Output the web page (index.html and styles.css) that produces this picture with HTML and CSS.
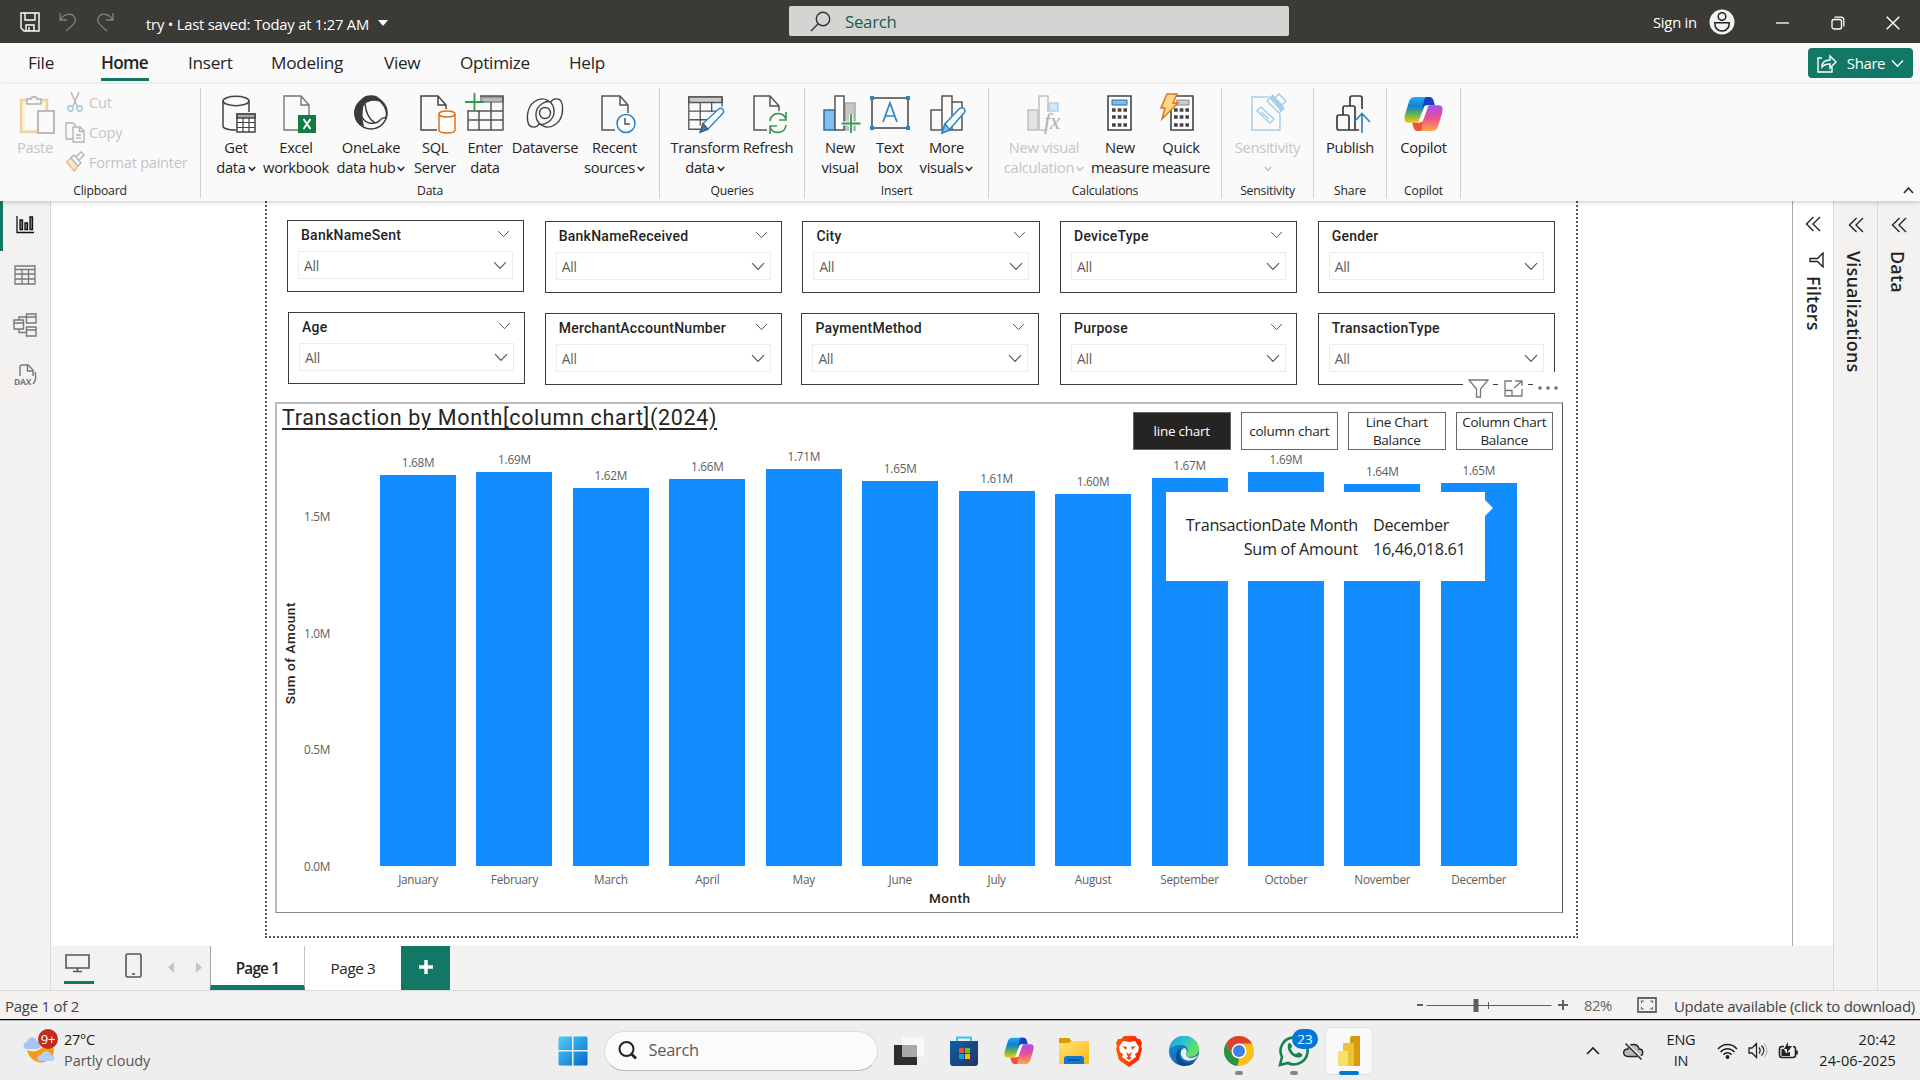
FILE: index.html
```html
<!DOCTYPE html>
<html lang="en">
<head>
<meta charset="utf-8">
<title>try - Power BI Desktop</title>
<link rel="stylesheet" href="styles.css">
</head>
<body>
<svg class="defs" width="0" height="0" aria-hidden="true">
  <defs>
    <linearGradient id="cpA" x1="0" y1="0" x2="0" y2="1"><stop offset="0" stop-color="#1fa9f5"/><stop offset=".35" stop-color="#0f7fd8"/><stop offset=".65" stop-color="#58b357"/><stop offset="1" stop-color="#fcc70d"/></linearGradient>
    <linearGradient id="cpB" x1="0" y1="0" x2="0" y2="1"><stop offset="0" stop-color="#a64ff0"/><stop offset=".5" stop-color="#ee5090"/><stop offset="1" stop-color="#ffa848"/></linearGradient>
    <linearGradient id="win" x1="0" y1="0" x2="1" y2="1"><stop offset="0" stop-color="#4fd1ff"/><stop offset="1" stop-color="#0067c8"/></linearGradient>
    <linearGradient id="fold" x1="0" y1="0" x2="1" y2="1"><stop offset="0" stop-color="#ffdf75"/><stop offset="1" stop-color="#fdbb10"/></linearGradient>
    <linearGradient id="store" x1="0" y1="0" x2="1" y2="1"><stop offset="0" stop-color="#0f5eab"/><stop offset="1" stop-color="#253560"/></linearGradient>
    <linearGradient id="brave" x1="0" y1="0" x2="1" y2="0"><stop offset="0" stop-color="#ff5a0a"/><stop offset="1" stop-color="#fa2000"/></linearGradient>
    <linearGradient id="edgeT" x1="0" y1="0" x2="1" y2=".5"><stop offset="0" stop-color="#1c9de0"/><stop offset=".5" stop-color="#2cc2cf"/><stop offset="1" stop-color="#6be25a"/></linearGradient>
    <linearGradient id="edgeB" x1="0" y1="0" x2="1" y2="1"><stop offset="0" stop-color="#1490df"/><stop offset="1" stop-color="#0c59a4"/></linearGradient>
    <symbol id="chev" viewBox="0 0 14 9"><path d="M1 1.2 7 7.5 13 1.2" fill="none" stroke="#555" stroke-width="1.1"/></symbol>
    <symbol id="mini" viewBox="0 0 8 6"><path d="M.8 1 4 4.3 7.2 1" fill="none" stroke="currentColor" stroke-width="1.5"/></symbol>
    <symbol id="dbl" viewBox="0 0 16 16"><path d="M8.5 1 1.5 8l7 7M15 1 8 8l7 7" fill="none" stroke="#252423" stroke-width="1.4"/></symbol>
    <symbol id="copilot" viewBox="0 0 38 34">
      <path d="M11 1h15c-3 0-4 2-5 6l-4 14c-1 3-2 5-5 5H4c-4 0-4-4-3-8L5 5c1-3 3-4 6-4z" fill="url(#cpA)"/>
      <path d="M22 1h3c3 0 4 3 5 8h-7c-3 0-4 1-5 4l-1 3 2-9c1-4 1-6 3-6z" fill="#173fc4"/>
      <path d="M27 34H12c3 0 4-2 5-6l4-14c1-3 2-5 5-5h8c4 0 4 4 3 8l-4 13c-1 3-3 4-6 4z" fill="url(#cpB)"/>
      <path d="M16 34h-3c-3 0-4-4-5-8h6c3 0 4-2 4-4l2-5-2 10c-1 4 0 7-2 7z" fill="#f0523c"/>
      <path d="m20 10 4-1-6 16h-4z" fill="#fff"/>
    </symbol>
  </defs>
</svg>

<header class="titlebar">
  <div class="quick">
    <svg width="20" height="20" viewBox="0 0 20 20" fill="none" stroke="#fff" stroke-width="1.4"><path d="M1 1h18v18H4l-3-3zM5 1v7h10V1M6 19v-6h8v6M9 19v-4"/></svg>
    <svg width="18" height="20" viewBox="0 0 18 20" fill="none" stroke="#85827e" stroke-width="1.3"><path d="M1 1v7h7M1 8C5 2 12 0 15.500 5c2.500 4-1 8-8.500 14"/></svg>
    <svg width="18" height="20" viewBox="0 0 18 20" fill="none" stroke="#85827e" stroke-width="1.3"><path d="M17 1v7h-7M17 8C13 2 6 0 2.500 5c-2.500 4 1 8 8.500 14"/></svg>
  </div>
  <div class="doc">try • Last saved: Today at 1:27 AM<svg width="10" height="6" viewBox="0 0 10 6"><path d="M0 0h10L5 6z" fill="#fff"/></svg></div>
  <div class="search"><svg width="21" height="21" viewBox="0 0 21 21" fill="none" stroke="#333" stroke-width="1.4"><circle cx="13" cy="8" r="6.700"/><path d="M8.200 12.800 1 20"/></svg><span>Search</span></div>
  <div class="account"><span>Sign in</span><svg width="26" height="26" viewBox="0 0 26 26"><circle cx="13" cy="13" r="12.500" fill="#f3f2f1"/><circle cx="13" cy="7.500" r="3.800" fill="none" stroke="#222" stroke-width="1.500"/><path d="M5.800 13.800h14.400c0 5-2.500 8.200-7.200 8.200s-7.200-3.200-7.200-8.200z" fill="none" stroke="#222" stroke-width="1.500"/></svg></div>
  <div class="winbtns">
    <svg width="14" height="14" viewBox="0 0 14 14" stroke="#fff" stroke-width="1.300"><path d="M0 7h13"/></svg>
    <svg width="14" height="14" viewBox="0 0 14 14" fill="none" stroke="#fff" stroke-width="1.300"><rect x="1" y="3.500" width="9.500" height="9.500" rx="2"/><path d="M3.500 1.200H10A2.800 2.800 0 0 1 12.800 4v6.500"/></svg>
    <svg width="14" height="14" viewBox="0 0 14 14" stroke="#fff" stroke-width="1.400"><path d="m.700.700 12.600 12.600M13.300.700.700 13.300"/></svg>
  </div>
</header>

<nav class="menubar">
  <a class="m-file">File</a><a class="m-home active">Home</a><a class="m-ins">Insert</a><a class="m-mod">Modeling</a><a class="m-view">View</a><a class="m-opt">Optimize</a><a class="m-help">Help</a>
  <button class="share"><svg width="20" height="19" viewBox="0 0 20 19" fill="none" stroke="#fff" stroke-width="1.400"><path d="M5 4H1v14h14v-5M5 13c0-5 3-7 8-7V2l6 6-6 6v-4c-4 0-6 .500-8 3z"/></svg><span>Share</span><svg width="13" height="9"><path d="M1 1.500 6.500 7.200 12 1.500" fill="none" stroke="#fff" stroke-width="1.400"/></svg></button>
</nav>

<section class="ribbon">
  <div class="group g-clip">
    <div class="items">
      <div class="item off w-paste"><svg class="ic" viewBox="0 0 40 44"><path d="M6 8h26v32H6z" fill="#fdf1da" stroke="#f0cfa0" stroke-width="2.500"/><path d="M10 12h18v25H10z" fill="#fafafa"/><path d="M12 12V7h4c0-3 6-3 6 0h4v5z" fill="#fafafa" stroke="#b0b0b0" stroke-width="1.500"/><path d="M23 19h16v22H23z" fill="#fafafa" stroke="#aaa" stroke-width="1.600"/></svg><span>Paste</span></div>
      <div class="cliplist">
        <div><svg width="20" height="22" viewBox="0 0 20 22" fill="none" stroke="#b5b5b5" stroke-width="1.400"><path d="m6 1 6 14M14 1 8 15"/><circle cx="5.500" cy="17.500" r="2.700" stroke="#9cc7e0"/><circle cx="14.500" cy="17.500" r="2.700" stroke="#9cc7e0"/></svg>Cut</div>
        <div><svg width="20" height="22" viewBox="0 0 20 22" fill="none" stroke="#b5b5b5" stroke-width="1.400"><path d="M8 18H1V2h7l3 3M8 6h7l4 4v11H8zM14.500 6v4.500H19M11 14h5M11 17h5"/></svg>Copy</div>
        <div><svg width="20" height="22" viewBox="0 0 20 22" fill="none" stroke="#b5b5b5" stroke-width="1.400"><path d="M1.500 11 8 5l6.500 7.500-5 7.500z" fill="#fbe3cb" stroke="#f0b98a"/><path d="m6 7 3-3 7 8-3 3zM11 6l5-5 3 3-5 5" fill="#fafafa"/></svg>Format painter</div>
      </div>
    </div>
    <div class="glabel">Clipboard</div>
  </div>

  <div class="group g-data">
    <div class="items">
      <div class="item w58"><svg class="ic" viewBox="0 0 40 44" fill="none" stroke="#444" stroke-width="1.500"><path d="M20 38C11 38 7 36 7 34V9M33 9v11"/><ellipse cx="20" cy="9" rx="13" ry="4.700"/><path d="M21 22h18v18H21z" fill="#fff"/><path d="M21 22h18v4H21z" fill="#aaa"/><path d="M21 30.500h18M21 35.500h18M27 26v14M33 26v14" stroke-width="1.200"/></svg><span>Get</span><span>data<svg class="mini"><use href="#mini"/></svg></span></div>
      <div class="item w62"><svg class="ic" viewBox="0 0 40 44"><path d="M22 38H8V4h17l8 9v10M25 4v9h8" fill="none" stroke="#777" stroke-width="1.400"/><path d="M22 23h18v18H22z" fill="#107c41"/><path d="m27.500 27 7 10M34.500 27l-7 10" stroke="#fff" stroke-width="2"/></svg><span>Excel</span><span>workbook</span></div>
      <div class="item w88"><svg class="ic" viewBox="0 0 40 44" fill="none" stroke="#3b3a39" stroke-width="1.500"><circle cx="20" cy="21" r="16"/><path d="M11 8c3-5 15-6 18 1-6-2-13-1-17 4 0 0-3 11 0 20C2 30 1 15 11 8z" fill="#3b3a39"/><path d="M14 12c1 9 5 16 10 19 6 0 4-7 12-5M23 31c-6 1-10-2-12-6M29 9c5 5 8 10 6 17"/></svg><span>OneLake</span><span>data hub<svg class="mini"><use href="#mini"/></svg></span></div>
      <div class="item w40"><svg class="ic" viewBox="0 0 40 44" fill="none" stroke="#444" stroke-width="1.500"><path d="M22 38H6V4h17l8 9v4M23 4v9h8"/><path d="M24 22v16c0 4 16 4 16 0V22" fill="#fff" stroke="#dd731c"/><ellipse cx="32" cy="22" rx="8" ry="3" fill="#fff" stroke="#dd731c"/></svg><span>SQL</span><span>Server</span></div>
      <div class="item w60"><svg class="ic" viewBox="0 0 40 44" fill="none" stroke="#555" stroke-width="1.600"><path d="M16 5h22v5H16z" fill="#bbb" stroke="#888"/><path d="M15 4h23v34H3V18M3 19h35M3 28h35M14 18v20M26 10v28" stroke-width="1.500"/><path d="M9.500 1v18M0 10h19" stroke="#2a9d4a" stroke-width="1.800"/></svg><span>Enter</span><span>data</span></div>
      <div class="item w60"><svg class="ic" viewBox="0 0 40 44" fill="none" stroke="#444" stroke-width="1.400"><circle cx="20" cy="21" r="5.500"/><path d="M9 10C2 15 1 27 4 33c2 3 8 3 10-1M31 32c7-5 8-17 5-23-2-3-8-3-10 1M9 10c9-7 21-1 20 11-1 8-10 13-15 11M31 32c-9 7-21 1-20-11 1-8 10-13 15-11"/></svg><span>Dataverse</span></div>
      <div class="item w79"><svg class="ic" viewBox="0 0 40 44" fill="none" stroke="#555" stroke-width="1.500"><path d="M20 38H7V4h18l8 9v8M25 4v9h8"/><circle cx="31" cy="31.500" r="9" fill="#fff" stroke="#2a86c7"/><path d="M30 26v6h5"/></svg><span>Recent</span><span>sources<svg class="mini"><use href="#mini"/></svg></span></div>
    </div>
    <div class="glabel">Data</div>
  </div>

  <div class="group g-query">
    <div class="items">
      <div class="item w70"><svg class="ic" viewBox="0 0 42 44" fill="none" stroke="#555" stroke-width="1.500"><path d="M4 4h35v6H4z" fill="#ccc"/><path d="M39 14V4H4v34h12M4 19h30M4 28h20M16 10v24M28 10v10" stroke-width="1.400"/><path d="m16 41 3-9 16-15c3-3 7 1 5 4L24 38z" fill="#fff" stroke="#2a86c7"/><path d="m16 41 3-9 5 6z" fill="#2a86c7"/></svg><span>Transform</span><span>data<svg class="mini"><use href="#mini"/></svg></span></div>
      <div class="item w56"><svg class="ic" viewBox="0 0 40 44" fill="none" stroke="#555" stroke-width="1.500"><path d="M19 38H6V4h16l9 10v5M22 4v10h9"/><path d="M22 29c1-9 13-10 16-2M38 20v8h-7M38 33c-1 9-13 10-16 2M22 42v-8h7" stroke="#3a9a53" stroke-width="1.700"/></svg><span>Refresh</span></div>
    </div>
    <div class="glabel">Queries</div>
  </div>

  <div class="group g-insert">
    <div class="items">
      <div class="item w40"><svg class="ic" viewBox="0 0 40 44" stroke="#555" stroke-width="1.500"><path d="M25 11h10v27H25z" fill="#c8c6c4" stroke="#aaa"/><path d="M4 18h11v20H4z" fill="#83beec" stroke="#1f6fb0"/><path d="M15 4h9v34h-9z" fill="#fff"/><path d="M31 22v19M21.500 31.500h19" stroke="#fafafa" stroke-width="4"/><path d="M31 22v19M21.500 31.500h19" stroke="#2a9d4a" stroke-width="1.800"/></svg><span>New</span><span>visual</span></div>
      <div class="item w60"><svg class="ic" viewBox="0 0 40 44" fill="none"><path d="M2 6h36v30H2z" stroke="#444" stroke-width="1.500"/><path d="m13 30 7-19 7 19M15.500 24h9" stroke="#2a86c7" stroke-width="1.700"/><path d="M0 4h4v4H0zM36 4h4v4h-4zM0 34h4v4H0zM36 34h4v4h-4z" fill="#2a86c7"/></svg><span>Text</span><span>box</span></div>
      <div class="item w53"><svg class="ic" viewBox="0 0 40 44" fill="none" stroke="#555" stroke-width="1.500"><path d="M4 18h11v20H4zM15 4h10v34H15zM25 10h10v28H25z"/><path d="m15 41 3-9 14-15c3-3 8 0 5 4L22 38z" fill="#fff" stroke="#2a86c7"/><path d="m15 41 3-9 5 6z" fill="#83beec" stroke="#2a86c7"/></svg><span>More</span><span>visuals<svg class="mini"><use href="#mini"/></svg></span></div>
    </div>
    <div class="glabel">Insert</div>
  </div>

  <div class="group g-calc">
    <div class="items">
      <div class="item off w92"><svg class="ic" viewBox="0 0 40 44" stroke="#c0c0c0" stroke-width="1.500"><path d="M4 18h10v20H4z" fill="#e5e5e5"/><path d="M25 11h9v8h-9z" fill="#d0e5f5" stroke="#b0d4ec"/><path d="M24 20V4h-9v34h6" fill="#fafafa"/><text x="20" y="37" class="fx">fx</text></svg><span>New visual</span><span>calculation<svg class="mini"><use href="#mini"/></svg></span></div>
      <div class="item w60"><svg class="ic" viewBox="0 0 40 44"><path d="M8 4h23v34H8z" fill="#fff" stroke="#444" stroke-width="1.600"/><path d="M12 8h15v5H12z" fill="#83beec" stroke="#1f6fb0"/><path d="M12 18h15M12 25h15M12 33h15" stroke="#444" stroke-width="3.500" stroke-dasharray="3.700 2"/></svg><span>New</span><span>measure</span></div>
      <div class="item w62"><svg class="ic" viewBox="0 0 40 44"><path d="M10 4h22v34H10z" fill="#fff" stroke="#444" stroke-width="1.600"/><path d="M16 8h12v5H14z" fill="#ccc" stroke="#888"/><path d="M13 18h15M13 25h15M13 33h15" stroke="#444" stroke-width="3.500" stroke-dasharray="3.700 2"/><path d="M6 2h10l-4 9h5L1 27l3-11H0z" fill="#ffd884" stroke="#dd731c" stroke-width="1.500"/></svg><span>Quick</span><span>measure</span></div>
    </div>
    <div class="glabel">Calculations</div>
  </div>

  <div class="group g-sens">
    <div class="items">
      <div class="item off"><svg class="ic" viewBox="0 0 40 44" fill="none" stroke="#a6cfe8" stroke-width="1.500"><path d="M22 5H5v33h28V22"/><path d="m10 19 4-4 13 12-4 4zM14 20l8 7M20 9l4-4 12 12-4 4z"/><path d="m24 4 12 14" stroke-width="5"/><path d="m28 6 4-4 7 7-4 4z" fill="#fafafa"/></svg><span>Sensitivity</span><span><svg class="mini"><use href="#mini"/></svg></span></div>
    </div>
    <div class="glabel">Sensitivity</div>
  </div>
  <div class="group g-share">
    <div class="items">
      <div class="item"><svg class="ic" viewBox="0 0 40 44" fill="none" stroke="#3b3a39" stroke-width="1.700"><path d="M29 38H9a2 2 0 0 1-2-2V25a2 2 0 0 1 2-2h8a2 2 0 0 1 2 2v13M13 23v-7a2 2 0 0 1 2-2h8a2 2 0 0 1 2 2v22M20 14V6a2 2 0 0 1 2-2h8a2 2 0 0 1 2 2v11"/><path d="M32 41V22M24 30l8-8.500 8 8.500" stroke="#2a86c7"/></svg><span>Publish</span></div>
    </div>
    <div class="glabel">Share</div>
  </div>
  <div class="group g-cop">
    <div class="items">
      <div class="item"><svg class="ic" viewBox="0 0 40 44"><use href="#copilot" x="0" y="4" width="39" height="35"/></svg><span>Copilot</span></div>
    </div>
    <div class="glabel">Copilot</div>
  </div>
  <svg class="collapse" width="11" height="8"><path d="M1 7 5.500 2 10 7" fill="none" stroke="#333" stroke-width="1.800"/></svg>
</section>

<main class="workspace">
  <aside class="rail">
    <div class="rail-btn on"><svg width="19" height="19" viewBox="0 0 19 19" fill="#888" stroke="#111" stroke-width="1.300"><path d="M1 1v16.500h17" fill="none"/><path d="M4 5h2.500v9.500H4zM9 8h2.500v6.500H9zM14 2h2.500v12.500H14z"/></svg></div>
    <div class="rail-btn"><svg width="22" height="20" viewBox="0 0 22 20" fill="none" stroke="#777" stroke-width="1.300"><path d="M1 1h20v18H1zM1 4.500h20M1 9h20M1 14h20M8 4v15M14.500 4v15"/></svg></div>
    <div class="rail-btn"><svg width="24" height="24" viewBox="0 0 24 24" fill="none" stroke="#777" stroke-width="1.400"><path d="M13.500 1H23v9h-9.500zM13.500 4H23M1 7h9.500v9H1zM1 10h9.500M13.500 14H23v9h-9.500zM13.500 17H23M6 7V4h7.500M6 16v3.500h7.500"/></svg></div>
    <div class="rail-btn"><svg width="23" height="22" viewBox="0 0 23 22" fill="none" stroke="#777" stroke-width="1.400"><path d="M6 12V3a2 2 0 0 1 2-2h6l5 5v6M13.500 1v6H19M21 8c1 4 1 9-2 12"/><text x="0" y="20.500" class="dax">DAX</text></svg></div>
  </aside>

  <div class="center">
    <div class="canvas">
      <div class="page">
        <div class="slicers">
          <div class="slicer up"><div class="s-head"><span>BankNameSent</span><svg class="c1"><use href="#chev"/></svg></div><div class="s-drop"><span>All</span><svg class="c2"><use href="#chev"/></svg></div></div>
          <div class="slicer"><div class="s-head"><span>BankNameReceived</span><svg class="c1"><use href="#chev"/></svg></div><div class="s-drop"><span>All</span><svg class="c2"><use href="#chev"/></svg></div></div>
          <div class="slicer"><div class="s-head"><span>City</span><svg class="c1"><use href="#chev"/></svg></div><div class="s-drop"><span>All</span><svg class="c2"><use href="#chev"/></svg></div></div>
          <div class="slicer"><div class="s-head"><span>DeviceType</span><svg class="c1"><use href="#chev"/></svg></div><div class="s-drop"><span>All</span><svg class="c2"><use href="#chev"/></svg></div></div>
          <div class="slicer"><div class="s-head"><span>Gender</span></div><div class="s-drop"><span>All</span><svg class="c2"><use href="#chev"/></svg></div></div>
          <div class="slicer up right"><div class="s-head"><span>Age</span><svg class="c1"><use href="#chev"/></svg></div><div class="s-drop"><span>All</span><svg class="c2"><use href="#chev"/></svg></div></div>
          <div class="slicer"><div class="s-head"><span>MerchantAccountNumber</span><svg class="c1"><use href="#chev"/></svg></div><div class="s-drop"><span>All</span><svg class="c2"><use href="#chev"/></svg></div></div>
          <div class="slicer left"><div class="s-head"><span>PaymentMethod</span><svg class="c1"><use href="#chev"/></svg></div><div class="s-drop"><span>All</span><svg class="c2"><use href="#chev"/></svg></div></div>
          <div class="slicer"><div class="s-head"><span>Purpose</span><svg class="c1"><use href="#chev"/></svg></div><div class="s-drop"><span>All</span><svg class="c2"><use href="#chev"/></svg></div></div>
          <div class="slicer"><div class="s-head"><span>TransactionType</span></div><div class="s-drop"><span>All</span><svg class="c2"><use href="#chev"/></svg></div></div>
        </div>

        <div class="visual">
          <div class="v-tools">
            <span><svg width="21" height="19" viewBox="0 0 21 19" fill="none" stroke="#777" stroke-width="1.300"><path d="M1 1h19l-7.500 9v8h-4v-8z"/></svg></span>
            <span><svg width="19" height="17" viewBox="0 0 19 17" fill="none" stroke="#777" stroke-width="1.300"><path d="M8 1H1v15h17V9M1 10.500h7V16M11 1h7v5M18 1l-8 7"/></svg></span>
            <span><svg width="20" height="4" viewBox="0 0 20 4" fill="#666"><circle cx="2" cy="2" r="1.700"/><circle cx="10" cy="2" r="1.700"/><circle cx="18" cy="2" r="1.700"/></svg></span>
          </div>
          <div class="v-head">
            <h2>Transaction by Month[column chart](2024)</h2>
            <div class="v-btns"><button class="dark">line chart</button><button>column chart</button><button>Line Chart Balance</button><button>Column Chart Balance</button></div>
          </div>
          <div class="plot">
            <div class="ytitle"><span>Sum of Amount</span></div>
            <div class="yaxis"><span>1.5M</span><span>1.0M</span><span>0.5M</span><span>0.0M</span></div>
            <div class="bars">
              <div class="col"><span>1.68M</span><i style="height:391px"></i><b>January</b></div>
              <div class="col"><span>1.69M</span><i style="height:394px"></i><b>February</b></div>
              <div class="col"><span>1.62M</span><i style="height:378px"></i><b>March</b></div>
              <div class="col"><span>1.66M</span><i style="height:387px"></i><b>April</b></div>
              <div class="col"><span>1.71M</span><i style="height:397px"></i><b>May</b></div>
              <div class="col"><span>1.65M</span><i style="height:385px"></i><b>June</b></div>
              <div class="col"><span>1.61M</span><i style="height:375px"></i><b>July</b></div>
              <div class="col"><span>1.60M</span><i style="height:372px"></i><b>August</b></div>
              <div class="col"><span>1.67M</span><i style="height:388px"></i><b>September</b></div>
              <div class="col"><span>1.69M</span><i style="height:394px"></i><b>October</b></div>
              <div class="col"><span>1.64M</span><i style="height:382px"></i><b>November</b></div>
              <div class="col"><span>1.65M</span><i style="height:383px"></i><b>December</b></div>
            </div>
          </div>
          <div class="xtitle">Month</div>
          <div class="tooltip"><span class="k">TransactionDate Month</span><span>December</span><span class="k">Sum of Amount</span><span>16,46,018.61</span></div>
        </div>
      </div>
    </div>
    <div class="tabs">
      <div class="view desk"><svg width="25" height="19" viewBox="0 0 25 19" fill="none" stroke="#555" stroke-width="1.600"><path d="M1 1h23v13H1zM12.500 14v3M8 17.500h9"/></svg></div>
      <div class="view phone"><svg width="17" height="25" viewBox="0 0 17 25" fill="none" stroke="#555" stroke-width="1.600"><rect x="1" y="1" width="15" height="23" rx="1.500"/><path d="M7 21h3"/></svg></div>
      <svg class="arr" width="6" height="11"><path d="M6 0v11L0 5.500z" fill="#c8c6c4"/></svg>
      <svg class="arr" width="6" height="11"><path d="M0 0v11l6-5.500z" fill="#c8c6c4"/></svg>
      <div class="tab cur">Page 1</div>
      <div class="tab">Page 3</div>
      <div class="add"><svg width="14" height="14"><path d="M7 0v14M0 7h14" stroke="#fff" stroke-width="3.400"/></svg></div>
    </div>
  </div>

  <div class="panes">
    <div class="pane p-filter"><svg width="16" height="16"><use href="#dbl"/></svg><svg class="fun" width="15" height="16" viewBox="0 0 15 16"><path d="M14 1v14L8.500 9.500H1v-3h7.500z" fill="none" stroke="#252423" stroke-width="1.400"/></svg><span>Filters</span></div>
    <div class="pane p-vis"><svg width="16" height="16"><use href="#dbl"/></svg><span>Visualizations</span></div>
    <div class="pane p-data"><svg width="16" height="16"><use href="#dbl"/></svg><span>Data</span></div>
  </div>
</main>

<footer class="status">
  <span class="pageno">Page 1 of 2</span>
  <div class="zoom"><svg width="152" height="16" viewBox="0 0 152 16" stroke="#605e5c"><path d="M0 8h6M141 8h10M146 3v10" stroke-width="2"/><path d="M9.500 8.500h125" stroke-width="1"/><path d="M59 2v13" stroke-width="5"/><path d="M71.500 5v7" stroke-width="1"/></svg><span>82%</span></div>
  <svg class="fit" width="20" height="16" viewBox="0 0 20 16" fill="none" stroke="#666"><path d="M1 1h18v14H1z" stroke-width="1.800"/><path d="M4.500 6V4H7M13 4h2.500v2M4.500 10v2H7M13 12h2.500v-2" stroke-width="1.200"/></svg>
  <span class="update">Update available (click to download)</span>
</footer>

<div class="taskbar">
  <div class="weather">
    <svg width="36" height="36" viewBox="0 0 36 36"><path d="M4 21c8 4 18-1 19-10 8 4 11 12 4 19-8 7-20 3-23-9z" fill="#f39a1e"/><path d="M3 20c-4-1-3-7 1-7 1-6 9-6 10-1 5 0 5 8 0 8z" fill="#a9c6f2"/><path d="M17 32c-4-1-3-6 1-6 2-5 9-5 10 0 5 0 5 6 0 6z" fill="#b5d0f8"/><circle cx="25" cy="10" r="10" fill="#c42b1c"/><text x="25" y="14.500" class="badge">9+</text></svg>
    <div><div>27°C</div><div class="dim">Partly cloudy</div></div>
  </div>
  <div class="apps">
    <svg class="a-start" width="30" height="30" viewBox="0 0 30 30"><path d="M1.500.500H14V14H.500V1.500zM15.500.500h13l1 1V14h-14zM.500 15.500H14v14H1.500l-1-1zM15.500 15.500h14v13l-1 1h-13z" fill="url(#win)"/></svg>
    <div class="pill"><svg width="19" height="19" viewBox="0 0 19 19" fill="none" stroke="#222" stroke-width="2"><circle cx="8.500" cy="8" r="7"/><path d="m13.500 13 4.500 4.500" stroke-width="2.600"/></svg><span>Search</span></div>
    <svg class="app" viewBox="0 0 32 32"><path d="M1 10h23v20H1z" fill="#2d2d2c"/><path d="M9 2h22v20H9z" fill="#f8f8f8"/><path d="M9 10h15v12H9z" fill="#a9a9a9"/></svg>
    <svg class="app" viewBox="0 0 32 32"><path d="M9 7V2.500h14V7" fill="none" stroke="#2cc3f5" stroke-width="1.800"/><path d="M2 6h28v22q0 3-3 3H5q-3 0-3-3z" fill="url(#store)"/><path d="M11 13h5v5h-5z" fill="#f25022"/><path d="M17 13h5v5h-5z" fill="#7fba00"/><path d="M11 19h5v5h-5z" fill="#00a4ef"/><path d="M17 19h5v5h-5z" fill="#ffb900"/></svg>
    <svg class="app" viewBox="0 0 32 32"><use href="#copilot" x="1" y="2" width="30" height="27"/></svg>
    <svg class="app" viewBox="0 0 32 32"><path d="M1 3h10l3 3h17v8H1z" fill="#dc9b05"/><path d="M1 8h10l2-2h18v23H1z" fill="url(#fold)"/><path d="M6 29v-5q0-3 3-3h14q3 0 3 3v5z" fill="#0f78cf"/><path d="M10 25h12" stroke="#0a4d90" stroke-width="1.500"/></svg>
    <svg class="app" viewBox="0 0 32 32"><path d="M11 1h11l3 3 2 0 2 4-1 3 1 3-3 11-10 7L6 25 3 14l1-3-1-3 2-4h3z" fill="url(#brave)"/><path d="m10 6 6 1 6-1 4 6-1 5-3 2 1 3-7 5-7-5 1-3-3-2-1-5z" fill="#fff"/><path d="m9 11 5 1-1 3zM23 11l-5 1 1 3zM13 17l3 2 3-2-2 5 2 1-3 2-3-2 2-1z" fill="#fb4208"/></svg>
    <svg class="app" viewBox="0 0 32 32"><circle cx="16" cy="16" r="15" fill="url(#edgeB)"/><path d="M1 15C2 6 8 1 16 1c9 0 15 6 15 13 0 5-4 8-9 8-4 0-5-2-3-4 2-3 0-8-6-8-5 0-10 2-12 5z" fill="url(#edgeT)"/><path d="M13 13c-5 9 2 19 14 14-3 3-7 4-11 4C7 30 5 18 13 13z" fill="#114a8b"/><path d="M19 17c-2 3-1 5 3 6 3 0 6-1 8-3-2 7-15 8-17 0-1-5 3-8 5-6z" fill="#eee"/></svg>
    <svg class="app" viewBox="0 0 32 32"><circle cx="16" cy="16" r="15" fill="#fbc116"/><path d="M3 8.500A15 15 0 0 1 29 8.500H16L9.500 20z" fill="#dc3f33"/><path d="M3 8.500 9.500 20 16 24l-1 7A15 15 0 0 1 3 8.500z" fill="#2a9444"/><path d="M22.500 20 16 31h-2l4-8z" fill="#fbc116"/><circle cx="16" cy="16" r="7.500" fill="#fff"/><circle cx="16" cy="16" r="6" fill="#3d7fe8"/><rect x="12" y="36" width="8" height="4" rx="2" fill="#858585"/></svg>
    <div class="app wa"><svg width="32" height="32" viewBox="0 0 32 32" overflow="visible"><path d="M2 30l2-8A13.500 13.500 0 1 1 10 28z" fill="none" stroke="#15834f" stroke-width="2.600"/><path d="M10 9c2-2 3-1 4 2 0 2-2 2-1 3 1 3 3 5 5 5 2-1 2-2 4-1 3 1 3 3 1 4-7 3-15-6-13-13z" fill="#15834f"/><rect x="12" y="36" width="8" height="4" rx="2" fill="#858585"/></svg><em>23</em></div>
    <div class="pbi"><svg width="32" height="32" viewBox="0 0 32 32" overflow="visible"><path d="M17 3q0-2 2-2h8v30H17z" fill="#d69a10"/><path d="M10 9q0-1 1-1h10v23H10z" fill="#edc332"/><path d="M5 17q0-1 1-1h9v15H5z" fill="#f8de6b"/><rect x="6" y="36" width="20" height="4" rx="2" fill="#0078d4"/></svg></div>
  </div>
  <div class="tray">
    <svg class="t1" width="14" height="9"><path d="M1 8 7 2l6 6" fill="none" stroke="#222" stroke-width="1.700"/></svg>
    <svg class="t2" width="21" height="18" viewBox="0 0 21 18"><path d="M5 14.500C-1 14-.500 7 5 7c1-6 10-6 11 0 5 0 5 7 0 7.500z" fill="#bbb" stroke="#222" stroke-width="1.400"/><path d="m3 1 15 15" stroke="#eee" stroke-width="3"/><path d="m2.500 1.500 16 16" stroke="#222" stroke-width="1.400"/></svg>
    <div class="lang"><div>ENG</div><div>IN</div></div>
    <svg class="t3" width="21" height="16" viewBox="0 0 21 16" fill="none" stroke="#222" stroke-width="1.500"><path d="M1 6c5-6 14-6 19 0M3.500 9c4-4.500 10-4.500 14 0M6.500 11.700c2-2.600 6-2.600 8 0"/><circle cx="10.500" cy="14" r="1.200" fill="#222"/></svg>
    <svg class="t4" width="20" height="17" viewBox="0 0 20 17" fill="none" stroke="#222" stroke-width="1.300"><path d="M1 6h3l4.500-4.500v14L4 11H1zM11 5.500c1.500 2 1.500 4 0 6M13.500 3.500c3 3 3 7 0 10"/><path d="M16 1.500c4 4 4 10 0 14" stroke="#bbb"/></svg>
    <svg class="t5" width="20" height="18" viewBox="0 0 20 18"><path d="M6 4.500H4Q1.500 4.500 1.500 7v6Q1.500 15.500 4 15.500h11q2.500 0 2.500-2.500V7q0-2.500-2.500-2.500M19 8.500v4" fill="none" stroke="#222" stroke-width="1.600"/><path d="M3.500 7H6l2 4 4-1v4h-8.500z" fill="#222"/><path d="m10 0-4 7h3v4l5-7h-4z" fill="#222"/></svg>
    <div class="clock"><div>20:42</div><div>24-06-2025</div></div>
  </div>
</div>
</body>
</html>
```
FILE: styles.css
```css
* { box-sizing: border-box; }
body { margin: 0; width: 1920px; height: 1080px; overflow: hidden; display: flex; flex-direction: column; font-family: "Open Sans", "Noto Sans", sans-serif; color: #252423; background: #fff; letter-spacing: -0.25px; }
svg { display: block; flex: none; }
.defs { position: absolute; }

/* title bar */
.titlebar { height: 43px; flex: none; background: #3b3a37; color: #fff; display: flex; align-items: center; font-size: 14px; }
.quick { display: flex; gap: 19px; padding-left: 20px; width: 146px; flex: none; }
.doc { display: flex; align-items: center; gap: 9px; width: 643px; padding-top: 5px; white-space: nowrap; font-size: 14.8px; letter-spacing: -0.22px; }
.doc svg { margin-top: -3px; }
.search { width: 500px; height: 30px; background: #d4d4d2; border-radius: 2px; display: flex; align-items: center; gap: 14px; padding-left: 21px; color: #1d5c50; font-size: 16.8px; flex: none; margin-top: -1px; }
.account { margin-left: 364px; display: flex; align-items: center; gap: 12px; width: 84px; white-space: nowrap; font-size: 14.8px; }
.winbtns { display: flex; gap: 41px; margin-left: 39px; padding-top: 3px; }

/* menu bar */
.menubar { height: 41px; flex: none; background: #fafafa; display: flex; font-size: 17.2px; position: relative; padding-left: 28px; letter-spacing: -0.3px; }
.menubar a { padding-top: 7px; height: 38px; line-height: 25px; flex: none; }
.m-file { width: 73px; }
.m-home { width: 48px; }
.m-home.active { font-weight: 600; border-bottom: 3px solid #117865; letter-spacing: -0.7px; }
.m-ins { width: 122px; padding-left: 39px; }
.m-mod { width: 113px; }
.m-view { width: 76px; }
.m-opt { width: 109px; }
.share { margin: 5px 7px 6px auto; width: 105px; height: 30px; border: 0; border-radius: 4px; background: #117865; color: #fff; font: 15px "Open Sans", sans-serif; letter-spacing: -0.4px; display: flex; align-items: center; justify-content: center; gap: 6px; padding: 0 2px; }
.share span { margin-left: 4px; }

/* ribbon */
.ribbon { height: 117px; flex: none; background: #fafafa; display: flex; padding-top: 4px; position: relative; z-index: 3; box-shadow: 0 1px 5px rgba(0,0,0,.22); }
.group { height: 110px; border-right: 1px solid #d0d0d0; display: flex; flex-direction: column; justify-content: space-between; flex: none; }
.items { display: flex; }
.item { display: flex; flex-direction: column; align-items: center; font-size: 14.7px; letter-spacing: -0.3px; line-height: 20px; white-space: nowrap; flex: none; padding-top: 4px; }
.item > span { display: flex; align-items: center; justify-content: center; min-height: 20px; }
.ic { width: 40px; height: 44px; margin-bottom: 1px; overflow: visible; }
.mini { width: 8px; height: 6px; margin: 3px 0 0 2px; }
.off { color: #c4c4c4; }
.glabel { font-size: 12.2px; line-height: 14px; text-align: center; letter-spacing: -0.2px; }
.g-clip { width: 201px; padding-left: 15px; }
.g-clip .glabel { margin-left: -15px; }
.g-data { width: 459px; } .g-data .items { padding-left: 6px; }
.g-query { width: 145px; } .g-query .items { padding-left: 10px; }
.g-insert { width: 184px; } .g-insert .items { padding-left: 15px; }
.g-calc { width: 233px; } .g-calc .items { padding-left: 9px; }
.g-sens { width: 92px; } .g-share { width: 73px; } .g-cop { width: 74px; }
.g-sens .items, .g-share .items, .g-cop .items { justify-content: center; }
.w-paste { width: 40px; }
.w40 { width: 40px; } .w53 { width: 53px; } .w56 { width: 56px; } .w58 { width: 58px; } .w60 { width: 60px; } .w62 { width: 62px; } .w70 { width: 70px; } .w79 { width: 79px; } .w88 { width: 88px; } .w92 { width: 92px; }
.cliplist { display: flex; flex-direction: column; padding-left: 10px; margin-top: -1px; color: #c4c4c4; font-size: 14.6px; }
.cliplist div { height: 30px; display: flex; align-items: center; gap: 4px; white-space: nowrap; }
.fx { font: italic 23px "Liberation Serif", serif; fill: #b0b0b0; stroke: none; }
.collapse { margin: auto 6px 7px auto; }

/* workspace */
.workspace { height: 789px; flex: none; display: flex; }
.rail { width: 51px; background: #f3f2f1; border-right: 1px solid #dcdad8; flex: none; }
.rail-btn { height: 50px; display: flex; align-items: center; justify-content: center; border-left: 3px solid transparent; padding: 0 3px 3px 0; }
.rail-btn.on { border-color: #117865; }
.dax { font: 700 8.500px "Open Sans", sans-serif; fill: #777; stroke: none; }
.center { width: 1741px; display: flex; flex-direction: column; flex: none; }
.canvas { height: 745px; padding-left: 214px; background: #fff; flex: none; }
.page { width: 1313px; height: 737px; padding: 20px 0 0 10px; background:
  repeating-linear-gradient(180deg, #555 0 2px, transparent 2px 4px) 0 0 / 2px 100% no-repeat,
  repeating-linear-gradient(180deg, #555 0 2px, transparent 2px 4px) 100% 0 / 2px 100% no-repeat,
  repeating-linear-gradient(90deg, #555 0 2px, transparent 2px 4px) 0 100% / 100% 2px no-repeat; }
.slicers { display: grid; grid-template-columns: repeat(5, 237.400px); column-gap: 20.300px; row-gap: 20px; padding-left: 12px; }
.slicer { height: 72px; border: 1px solid #3c3c3c; padding: 3px 10px; }
.slicer.up { margin-top: -1px; margin-bottom: 1px; }
.slicer.right { margin-left: 1px; margin-right: -1px; }
.slicer.left { margin-left: -1px; margin-right: 1px; }
.s-head { height: 27px; display: flex; align-items: center; justify-content: space-between; padding: 0 3px 5px; font: 500 14px Roboto, sans-serif; letter-spacing: 0.25px; }
.s-drop { height: 28px; border: 1px solid #ececec; display: flex; align-items: center; justify-content: space-between; padding: 0 5px; font-size: 13.8px; color: #605e5c; }
.c1 { width: 13px; height: 8px; margin-top: -3px; }
.c2 { width: 14px; height: 9px; }

.visual { width: 1288px; height: 511px; margin-top: 17px; border: 2px solid #bbb; border-right: 1px solid #555; border-bottom: 1px solid #888; position: relative; }
.v-tools { position: absolute; right: -1px; top: -32px; display: flex; gap: 5px; }
.v-tools span { width: 30px; height: 30px; background: #fff; display: flex; align-items: center; justify-content: center; padding-top: 2px; }
.v-head { display: flex; justify-content: space-between; height: 47px; padding-right: 9px; }
.v-head h2 { margin: 0; padding: 1px 0 0 5px; font: 400 21.500px/26px Roboto, sans-serif; letter-spacing: 0.67px; text-decoration: underline; text-underline-offset: 3px; text-decoration-thickness: 2px; white-space: nowrap; }
.v-btns { display: flex; gap: 10px; padding-top: 8px; }
.v-btns button { width: 97.500px; height: 38px; border: 1px solid #666; background: #fff; padding: 1px 1px 0; font: 13.500px/17.500px "Open Sans", sans-serif; letter-spacing: -0.25px; color: #252423; }
.v-btns .dark { background: #252423; color: #fff; }
.plot { display: flex; height: 436px; }
.ytitle { width: 25px; height: 404px; display: flex; align-items: center; justify-content: center; }
.ytitle span { writing-mode: vertical-rl; transform: rotate(180deg); font: 500 13.500px Roboto, sans-serif; letter-spacing: 0.6px; }
.yaxis { width: 28px; padding-top: 57px; display: flex; flex-direction: column; align-items: flex-end; font-size: 11.800px; color: #605e5c; letter-spacing: -0.3px; }
.yaxis span { height: 116.600px; line-height: 16px; flex: none; }
.bars { display: flex; gap: 20.450px; align-items: flex-end; padding-left: 50px; }
.col { width: 76px; display: flex; flex-direction: column; align-items: center; color: #605e5c; font-size: 11.800px; line-height: 16px; letter-spacing: -0.25px; }
.col span { margin-bottom: 5px; }
.col i { width: 76px; background: #118dff; }
.col b { font-weight: 400; height: 21px; padding-top: 5px; white-space: nowrap; }
.xtitle { font: 500 13.500px/16px Roboto, sans-serif; letter-spacing: 0.5px; padding: 3px 0 0 652px; }
.tooltip { position: absolute; left: 889px; top: 88px; width: 319px; height: 89px; background: #fff; display: grid; grid-template-columns: 173px 1fr; grid-auto-rows: 24px; column-gap: 15px; padding: 21px 0 0 19px; font-size: 16.200px; line-height: 24px; letter-spacing: -0.28px; white-space: nowrap; }
.tooltip .k { text-align: right; }
.tooltip::after { content: ""; position: absolute; left: 319px; top: 8px; border: 8px solid transparent; border-left-color: #fff; border-right: 0; }

.tabs { height: 44px; background: #f3f2f1; display: flex; align-items: center; font-size: 15.3px; }
.view { display: flex; justify-content: center; }
.desk { width: 30px; margin: 1px 0 0 13px; height: 30px; padding-right: 3px; border-bottom: 3px solid #117865; }
.phone { width: 17px; margin: -6px 26px 0 31px; }
.arr { margin: -2px 22px 0 0; }
.arr + .arr { margin-right: 8px; }
.tab { width: 96px; height: 44px; background: #fff; display: flex; align-items: center; justify-content: center; letter-spacing: -0.4px; }
.tab.cur { width: 95px; font-weight: 600; letter-spacing: -0.8px; border-left: 1px solid #a0a0a0; border-right: 1px solid #c8c6c4; border-bottom: 5px solid #117865; padding-top: 5px; }
.add { width: 49px; height: 44px; background: #117865; display: flex; align-items: center; justify-content: center; padding-bottom: 2px; }

.panes { display: flex; width: 128px; background: #f3f2f1; }
.pane { display: flex; flex-direction: column; align-items: center; padding-top: 16px; }
.pane span { writing-mode: vertical-rl; font-weight: 600; font-size: 18px; letter-spacing: 0.15px; }
.p-filter { width: 41px; height: 745px; background: #fff; border-left: 1px solid #aaa; padding-top: 15px; }
.p-filter .fun { margin: 20px 0 8px 6px; }
.p-filter span { margin-left: 2px; }
.p-vis, .p-data { border-left: 1px solid #dcdad8; }
.p-vis { width: 44px; } .p-data { width: 43px; }
.p-vis span, .p-data span { margin-top: 18px; margin-right: 3px; }

/* status bar */
.status { height: 30px; flex: none; background: #f3f2f1; border-top: 1px solid #dcdad8; border-bottom: 1px solid #000; display: flex; align-items: center; font-size: 15px; color: #444; padding: 1px 5px 0; white-space: nowrap; }
.pageno { width: 1413px; letter-spacing: -0.25px; }
.zoom { display: flex; align-items: center; gap: 15px; margin-top: -2px; width: 220px; color: #666; }
.zoom span { letter-spacing: -0.5px; font-size: 14.800px; }
.fit { margin-top: -1px; }
.update { margin-left: 17px; letter-spacing: -0.27px; }

/* taskbar */
.taskbar { height: 60px; flex: none; background: #eee; border-top: 1px solid #b8b8b8; display: flex; align-items: center; font-size: 14.500px; line-height: 20.500px; color: #1a1a1a; }
.weather { display: flex; gap: 5px; padding-left: 23px; width: 558px; }
.weather svg { margin-top: -1px; }
.dim { color: #555; letter-spacing: -0.05px; }
.badge { font: 13px "Open Sans", sans-serif; fill: #fff; text-anchor: middle; }
.apps { display: flex; align-items: center; width: 1028px; }
.pill { width: 274px; height: 40px; margin: 0 15.500px; border-radius: 20px; background: #fbfbfb; border: 1px solid #dcdcdc; border-bottom-color: #bbb; display: flex; align-items: center; gap: 12px; padding-left: 13px; font-size: 16.400px; color: #5a5a5a; }
.app { width: 32px; height: 32px; margin-right: 23px; overflow: visible; }
.wa { position: relative; margin-right: 15px; }
.wa em { position: absolute; left: 14px; top: -6px; width: 26px; height: 20px; border-radius: 10px; background: #0078d4; color: #fff; font-style: normal; font-size: 13.500px; line-height: 20px; text-align: center; letter-spacing: 0; }
.pbi { width: 48px; height: 48px; border-radius: 5px; background: #f9f9f9; border: 1px solid #e2e2e2; display: flex; align-items: center; justify-content: center; }
.tray { display: flex; align-items: center; width: 334px; }
.t2 { margin-left: 23px; }
.lang { width: 36px; text-align: center; margin: 0 18px 0 19px; }
.t4 { margin-left: 10px; } .t5 { margin-left: 10px; }
.clock { margin-left: auto; margin-right: 24px; text-align: right; letter-spacing: 0.1px; }
```
